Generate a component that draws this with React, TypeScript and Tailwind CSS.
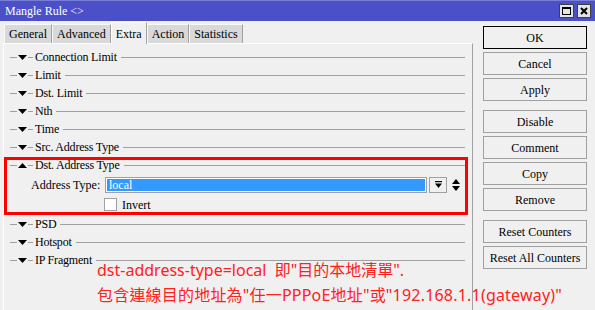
import React from 'react';

const Tri = ({ up }: { up?: boolean }) => (
  <svg width="9" height="5" viewBox="0 0 9 5" className="shrink-0">
    <polygon points={up ? '0,5 9,5 4.5,0' : '0,0 9,0 4.5,5'} fill="#000" />
  </svg>
);

const Section: React.FC<{ title: string; up?: boolean }> = ({ title, up }) => (
  <div className="flex items-center h-[18px]">
    <div className="ml-[6px] w-[7px] h-px bg-[#a0a0a0]" />
    <div className="ml-px">
      <Tri up={up} />
    </div>
    <div className="ml-px w-[5px] h-px bg-[#a0a0a0]" />
    <span className="ml-[2px] leading-none whitespace-nowrap tracking-[-0.2px]">{title}</span>
    <div className="flex-1 h-px bg-[#a0a0a0] ml-[4px] mr-[7px]" />
  </div>
);

const Btn: React.FC<{ label: string; primary?: boolean; gap?: boolean }> = ({ label, primary, gap }) => (
  <div
    className={`h-[23px] w-[104px] flex items-center justify-center bg-[#f0f0f0] border ${
      primary ? 'border-black' : 'border-[#a0a0a0]'
    } ${gap ? 'mt-[9px]' : 'mt-[3px]'}`}
  >
    {label}
  </div>
);

const Tab: React.FC<{ label: string; active?: boolean }> = ({ label, active }) => (
  <div
    className={`flex items-center justify-center px-[4px] border-t border-l border-r ${
      active
        ? 'h-[22px] bg-[#f0f0f0] border-t-white border-l-white border-r-[#a0a0a0] relative -mb-px z-10'
        : 'h-[19px] bg-[#d9d9d9] border-t-[#f8f8f8] border-l-[#f8f8f8] border-r-[#a0a0a0]'
    }`}
  >
    {label}
  </div>
);

export default function App() {
  const before = ['Connection Limit', 'Limit', 'Dst. Limit', 'Nth', 'Time', 'Src. Address Type'];
  const after = ['PSD', 'Hotspot', 'IP Fragment'];
  return (
    <div className="relative w-[595px] h-[310px] overflow-hidden bg-[#f0f0f0] text-[12px] text-black font-['Liberation_Serif',serif]">
      {/* title bar */}
      <div className="h-[21px] bg-[#4b50c8] border-t border-[#7a7ed8] flex items-center justify-between pl-[5px] pr-[4px]">
        <span className="text-white text-[12px] leading-none">Mangle Rule &lt;&gt;</span>
        <div className="flex gap-[3px]">
          <div className="w-[15px] h-[14px] bg-[#e4e4e4] border border-[#404040] flex items-center justify-center">
            <div className="w-[9px] h-[8px] border border-black border-t-2" />
          </div>
          <div className="w-[14px] h-[14px] bg-[#e4e4e4] border border-[#404040] flex items-center justify-center">
            <svg width="8" height="8" viewBox="0 0 8 8">
              <path d="M1 1 L7 7 M7 1 L1 7" stroke="#000" strokeWidth="2" />
            </svg>
          </div>
        </div>
      </div>

      <div className="flex">
        {/* left: tabs + panel */}
        <div className="w-[473px] flex flex-col">
          <div className="flex items-end h-[22px] pl-[4px]">
            <Tab label="General" />
            <Tab label="Advanced" />
            <Tab label="Extra" active />
            <Tab label="Action" />
            <Tab label="Statistics" />
          </div>
          <div className="ml-[3px] h-[267px] border-t border-l border-t-white border-l-white border-r border-r-[#a0a0a0] pt-[4px]">
            {before.map((t) => (
              <Section key={t} title={t} />
            ))}
            <Section title="Dst. Address Type" up />
            <div className="flex items-center h-[20px] pt-px">
              <span className="ml-[27px] w-[74px] whitespace-nowrap">Address Type:</span>
              <div className="w-[322px] h-[16px] border border-[#a0a0a0] bg-white p-px">
                <div className="h-full bg-[#3399ff] text-white leading-[12px] pl-[2px]">local</div>
              </div>
              <div className="ml-[2px] w-[18px] h-[16px] border border-[#a0a0a0] bg-[#f0f0f0] flex items-center justify-center">
                <svg width="7" height="7" viewBox="0 0 7 7">
                  <rect x="0" y="0" width="7" height="1.2" fill="#000" />
                  <polygon points="0,2.5 7,2.5 3.5,7" fill="#000" />
                </svg>
              </div>
              <svg className="ml-[5px]" width="8" height="14" viewBox="0 0 8 14">
                <polygon points="0,6 8,6 4,1" fill="#000" />
                <polygon points="0,8 8,8 4,13" fill="#000" />
              </svg>
            </div>
            <div className="flex items-center h-[21px]">
              <div className="ml-[100px] w-[13px] h-[13px] bg-white border border-[#a0a0a0]" />
              <span className="ml-[5px]">Invert</span>
            </div>
            {after.map((t) => (
              <Section key={t} title={t} />
            ))}
          </div>
        </div>

        {/* right: buttons */}
        <div className="flex-1 flex flex-col pl-[10px] pt-[2px]">
          <Btn label="OK" primary />
          <Btn label="Cancel" />
          <Btn label="Apply" />
          <Btn label="Disable" gap />
          <Btn label="Comment" />
          <Btn label="Copy" />
          <Btn label="Remove" />
          <Btn label="Reset Counters" gap />
          <Btn label="Reset All Counters" />
        </div>
      </div>

      {/* annotation overlay */}
      <div className="absolute left-[4px] top-[157px] w-[464px] h-[58px] border-[3px] border-[#ff0000]" />
      <div className="absolute left-[97px] top-[258px] text-[16px] leading-[25px] text-[#ff2020] whitespace-nowrap font-['Noto_Sans','Noto_Sans_CJK_TC',sans-serif]">
        <div>dst-address-type=local&nbsp;&nbsp;即"目的本地清單".</div>
        <div className="tracking-[0.2px]">包含連線目的地址為"任一PPPoE地址"或"192.168.1.1(gateway)"</div>
      </div>
    </div>
  );
}
